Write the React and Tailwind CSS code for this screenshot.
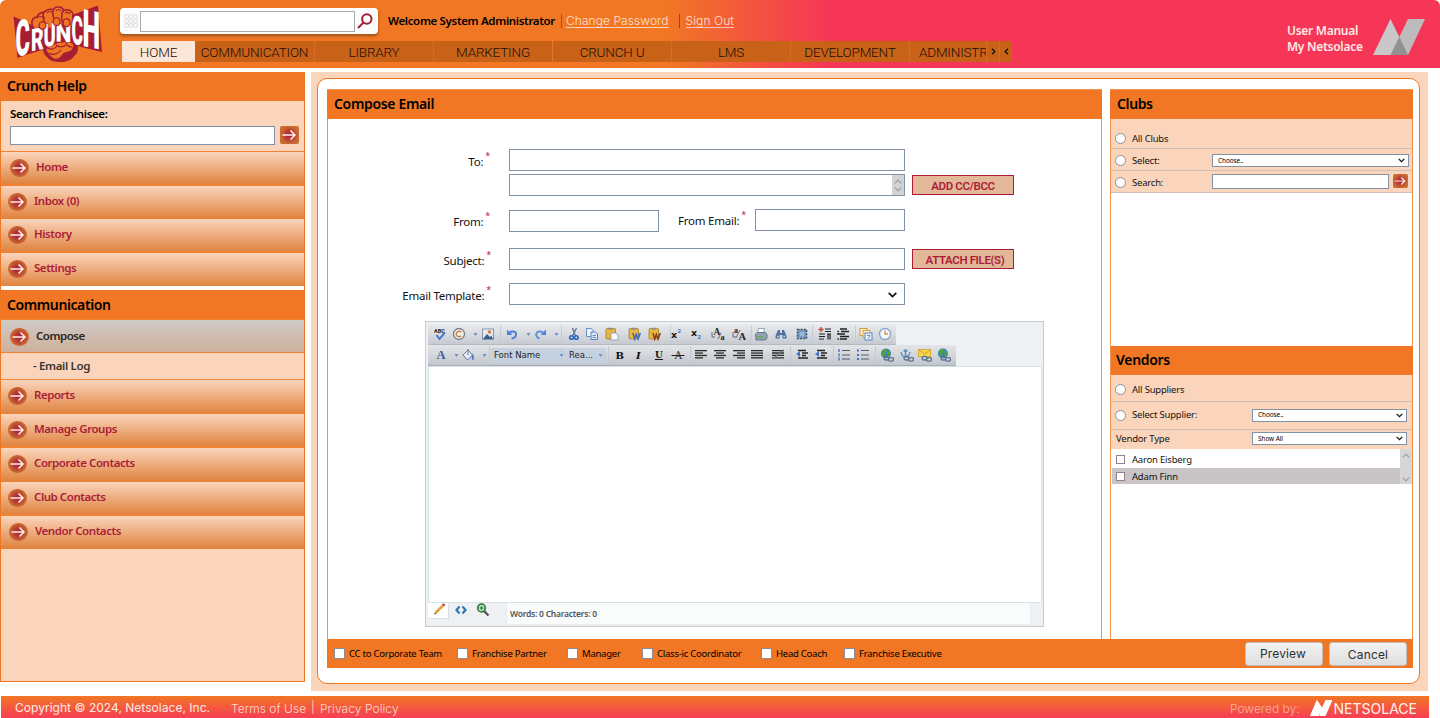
import React from "react";

/* ---------- small shared pieces ---------- */

function Arrow({ className }) {
  return (
    <svg viewBox="0 0 19 18" className={className} fill="none" stroke="#fdeee6" strokeWidth="1.5">
      <path d="M2.5 9H15M10.5 4.5L15 9l-4.5 4.5" />
    </svg>
  );
}

function RoundArrow() {
  return (
    <span className="flex h-[18px] w-[19px] shrink-0 items-center justify-center rounded-full bg-[radial-gradient(circle,#a81f3a_0%,#b53836_30%,#cb6b30_68%)]">
      <Arrow className="h-[18px] w-[19px]" />
    </span>
  );
}

function Chevron({ className }) {
  return (
    <svg viewBox="0 0 8 6" className={className} fill="none" stroke="#111" strokeWidth="1.5">
      <path d="M.6 1L4 4.4 7.4 1" />
    </svg>
  );
}

function NetsolaceMark({ className, a, b, c }) {
  return (
    <svg viewBox="0 0 52 36" className={className}>
      <path d="M0 36L17.5 0 35 36z" fill={a} />
      <path d="M17.5 36L35 0h17L35 36z" fill={b} />
      <path d="M17.5 36L26.3 18 35 36z" fill={c} />
    </svg>
  );
}

function CrunchLogo() {
  return (
    <svg viewBox="0 0 110 68" className="h-[68px] w-[110px]">
      <path d="M43 44l33-3c4 6 2 13-2 15-2 4-8 6-14 6-5 0-10-1-12-4-4-3-6-8-5-14z" fill="#a61e36" />
      <path d="M47 45c6-4 20-6 25-3 2 3 1 7-2 9-5 1-7 2-9 5-3 4-8 3-10 0-4-3-5-7-4-11z" fill="#ef7723" />
      <path d="M47 48c4 2 8 1 10-2M56 45c4 3 7 2 10 0M49 53c4 3 9 1 12-3M66 43c1 3 3 4 6 4" fill="none" stroke="#a61e36" strokeWidth="1.2" />
      <path d="M13.500 16.500L32 25l12-4 28-6 26-9.500 4 46.500-21-5-13-5-10 1-13 6-16 5-11.500 4z" fill="#a61e36" />
      <g fill="#ef7723" stroke="#a61e36" strokeWidth="1.600">
        <path d="M32 24c-1-4 2-7 5-7 1-4 7-6 11-4l1 10-3 8c-5 1-13 0-14-7z" />
        <path d="M43 15c0-4 7-7 11-5l1 14-5 5c-4 0-7-10-7-14z" />
        <path d="M53 11c1-5 8-5 10-2l1 16-4 3c-4-2-8-12-7-17z" />
        <path d="M62 13c2-5 9-4 11 1l-1 12c-1 3-5 4-7 2-3-3-4-11-3-15z" />
      </g>
      <path d="M37 18c2-2 6-2 8 0M47 13c2-2 4-2 6 0M56 11c2-2 4-2 5 0M65 13c2-1 4-1 5 1" fill="none" stroke="#a61e36" strokeWidth="1.100" />
      <g fontFamily="Roboto" fontWeight="900" fontSize="10" fill="#fff">
        <text transform="translate(15.5 57) skewY(-13) scale(2.2 5)">C</text>
        <g stroke="#a61e36" strokeWidth=".45" paintOrder="stroke">
          <text transform="translate(31 51.5) skewY(-12) scale(1.95 3.1)">R</text>
          <text transform="translate(43.5 47) skewY(-8) scale(1.85 3.2)">U</text>
          <text transform="translate(55.5 41.5) skewY(3) scale(2.25 2.5)">N</text>
        </g>
        <text transform="translate(71.5 43.5) skewY(10) scale(1.75 4)">C</text>
        <text transform="translate(82.500 46) skewY(11) scale(2.500 5.200)">H</text>
      </g>
      <g fill="#ef7723" stroke="#a61e36" strokeWidth="1.200">
        <path d="M39 26c0-5 6-6 7-1 0 5-6 6-7 1z" />
        <path d="M53 22c0-5 6-6 7-1 0 6-6 6-7 1z" />
        <path d="M63 23c0-5 6-6 7-1 0 6-6 6-7 1z" />
      </g>
    </svg>
  );
}

/* ---------- header ---------- */

const NAV = [
  ["HOME", "w-[73px] bg-[#fce6d8]"],
  ["COMMUNICATION", "w-[119px] bg-[#c96219]"],
  ["LIBRARY", "w-[119px] border-l border-[#d96c1d] bg-[#c96219]"],
  ["MARKETING", "w-[119px] border-l border-[#d96c1d] bg-[#c96219]"],
  ["CRUNCH U", "w-[119px] border-l border-[#e8772a] bg-[#c96219]"],
  ["LMS", "w-[119px] border-l border-[#d96c1d] bg-[#c96219]"],
  ["DEVELOPMENT", "w-[119px] border-l border-[#d96c1d] bg-[#c96219]"],
];

function Header() {
  return (
    <header className="flex h-[68px] rounded-t-[6px] bg-[linear-gradient(90deg,#f17724_0px,#f17724_668px,#f63656_828px,#f63656_100%)]">
      <div className="w-[120px] shrink-0">
        <CrunchLogo />
      </div>
      <div className="flex w-[893px] shrink-0 flex-col pt-2">
        <div className="flex h-[26px] items-center">
          <div className="flex h-[26px] w-[258px] items-center rounded-[4px] border-2 border-white bg-[#fafcfd] shadow-[0_2px_3px_rgba(90,50,20,.55)]">
            <svg viewBox="0 0 14 14" className="ml-[2px] h-[14px] w-[14px]" fill="none" stroke="#dcd6d8" strokeWidth=".9">
              {[2.5, 7, 11.5].map((y) => [2.5, 7, 11.5].map((x) => <circle key={x + "-" + y} cx={x} cy={y} r="2" />))}
            </svg>
            <div className="ml-[2px] h-[21px] w-[215px] border border-[#a9abad] bg-white" />
            <svg viewBox="0 0 16 16" className="ml-[2px] h-4 w-4" fill="none" stroke="#a61e36" strokeWidth="2">
              <circle cx="9.8" cy="6" r="4.7" />
              <path d="M6.5 9.5L1 15" />
            </svg>
          </div>
          <span className="ml-[10px] mb-px w-[170px] whitespace-nowrap text-[11.5px] font-semibold tracking-[-0.34px] text-black">
            Welcome System Administrator
          </span>
          <span className="ml-[3px] h-[14px] w-px bg-[#b5471a]" />
          <a className="ml-[4px] border-b border-[#fbd2bd] font-['Inter',sans-serif] text-[12px] font-light leading-[13px] tracking-[0.07px] text-[#fde0d0]">
            Change Password
          </a>
          <span className="ml-[10px] h-[14px] w-px bg-[#a83a35]" />
          <a className="ml-[6px] border-b border-[#fbc0bd] font-['Inter',sans-serif] text-[12px] font-light leading-[13px] tracking-[0.07px] text-[#fde0d0]">
            Sign Out
          </a>
        </div>
        <nav className="ml-[2px] mt-[7px] flex h-[21px] whitespace-nowrap font-['Roboto',sans-serif] text-[13.5px] font-light leading-[23px] tracking-[-0.2px] text-[#1c0d05]">
          {NAV.map(([label, cls]) => (
            <div key={label} className={"shrink-0 text-center " + cls}>{label}</div>
          ))}
          <div className="w-[77px] shrink-0 overflow-hidden border-l border-[#d96c1d] bg-[#c96219] pl-[9px]">ADMINISTRATION</div>
          <div className="flex w-[13px] shrink-0 items-center justify-center border-l border-[#d96c1d] bg-[#c96219]">
            <svg viewBox="0 0 5 7" className="h-[7px] w-[5px]" fill="none" stroke="#111" strokeWidth="1.3"><path d="M1 .8L3.8 3.5 1 6.2" /></svg>
          </div>
          <div className="flex w-[13px] shrink-0 items-center justify-center border-l border-[#d96c1d] bg-[#c96219]">
            <svg viewBox="0 0 5 7" className="h-[7px] w-[5px]" fill="none" stroke="#111" strokeWidth="1.3"><path d="M4 .8L1.2 3.5 4 6.2" /></svg>
          </div>
        </nav>
      </div>
      <div className="ml-auto flex pr-[15px]">
        <div className="w-[86px] whitespace-nowrap pt-[23px] text-[12px] font-semibold leading-4 tracking-[-0.28px] text-[#fde9e6]">
          <div>User Manual</div>
          <div>My Netsolace</div>
        </div>
        <NetsolaceMark className="mt-[19px] h-9 w-[52px]" a="#c9c7c8" b="#bdbbbc" c="#929091" />
      </div>
    </header>
  );
}

/* ---------- sidebar ---------- */

function SideItem({ label, className }) {
  return (
    <div className={"flex items-center border-[#ef8233] bg-[linear-gradient(180deg,#fad5bc,#e08440)] " + className}>
      <RoundArrow />
      <span className="ml-[7px] pb-[2px] text-[11.5px] font-semibold tracking-[-0.45px] text-[#ab1d37]">{label}</span>
    </div>
  );
}

function Sidebar() {
  return (
    <aside className="flex h-[610px] w-[305px] shrink-0 flex-col border border-t-0 border-[#ef7723] bg-[#fad5bc]">
      <h2 className="h-[29px] shrink-0 bg-[#f17724] pl-[6px] text-[14px] font-semibold leading-[28px] tracking-[-0.4px] text-black">Crunch Help</h2>
      <div className="h-[50px] shrink-0 pl-[9px]">
        <div className="h-[25px] text-[11.5px] font-semibold leading-[26px] tracking-[-0.38px] text-black">Search Franchisee:</div>
        <div className="flex">
          <div className="h-[19px] w-[265px] border border-[#8492a6] bg-white" />
          <span className="ml-[5px] flex h-[18px] w-[19px] rounded-[2px] bg-[radial-gradient(circle,#a81f3a_0%,#b53836_30%,#cb6b30_68%)]">
            <Arrow className="h-[18px] w-[19px]" />
          </span>
        </div>
      </div>
      <SideItem label="Home" className="h-[35px] border-b-2 border-t pl-[9px]" />
      <SideItem label="Inbox (0)" className="h-[33px] border-b pl-[7px] pb-px" />
      <SideItem label="History" className="h-[34px] border-b-2 pl-[7px]" />
      <SideItem label="Settings" className="h-[33px] pb-px pl-[7px]" />
      <div className="h-1 shrink-0 bg-white" />
      <h2 className="h-[29px] shrink-0 bg-[#f17724] pl-[6px] text-[14px] font-semibold leading-[30px] tracking-[-0.4px] text-black">Communication</h2>
      <div className="flex h-[34px] shrink-0 items-center border-y border-[#ef8233] bg-[linear-gradient(180deg,#cfcac6,#ceb09c)] pl-[9px] pt-px">
        <RoundArrow />
        <span className="ml-[7px] pb-[2px] text-[11.5px] font-semibold tracking-[-0.5px] text-[#2b2523]">Compose</span>
      </div>
      <div className="h-[27px] shrink-0 border-b border-[#ef8233] pl-8 text-[11.5px] font-semibold leading-[26px] tracking-[-0.35px] text-[#3a3431]">
        - Email Log
      </div>
      <SideItem label="Reports" className="h-[34px] border-b pb-px pl-[7px]" />
      <SideItem label="Manage Groups" className="h-[34px] border-b-2 pl-[7px]" />
      <SideItem label="Corporate Contacts" className="h-[34px] border-b pb-px pl-[7px]" />
      <SideItem label="Club Contacts" className="h-[34px] border-b-2 pl-[7px]" />
      <SideItem label="Vendor Contacts" className="h-[33px] border-b pl-[8px]" />
    </aside>
  );
}

/* ---------- editor toolbar ---------- */

const Svg = ({ className, children }) => (
  <svg viewBox="0 0 14 14" className={"h-[14px] w-[14px] shrink-0 " + className}>{children}</svg>
);
const Sep = ({ className }) => <span className={"h-[18px] w-px shrink-0 bg-[#c3cbd4] " + className} />;
const Caret = ({ className }) => (
  <svg viewBox="0 0 5 3" className={"h-[3px] w-[5px] shrink-0 " + className}><path d="M.5 0h4L2.5 3z" fill="#6a92c4" /></svg>
);
const Lines = ({ className, rows }) => (
  <Svg className={className}>
    {rows.map(([x, w], i) => <rect key={i} x={x} y={2 + i * 2.4} width={w} height="1.3" fill="#2a2a2a" />)}
  </Svg>
);
const Globe = () => (
  <g>
    <circle cx="6" cy="5.5" r="5" fill="#3f7fc4" />
    <path d="M2 3c2-3 5-2 5-.5S4.500 5 5 7 3 9 1.500 7zM7.500 3.500c1-1.500 3-.5 3 2S8.500 9.500 7.500 7.500z" fill="#4ba243" />
  </g>
);
const Chain = () => (
  <g fill="none" stroke="#5f7390" strokeWidth="1.300">
    <rect x="4" y="8.500" width="5" height="3.500" rx="1.700" />
    <rect x="8.500" y="9.700" width="5" height="3.500" rx="1.700" />
  </g>
);
const Clipboard = ({ mark }) => (
  <g>
    <rect x="1" y="1.500" width="9.500" height="10.500" rx="1" fill="#e9b640" stroke="#9a7323" strokeWidth=".7" />
    <rect x="3.500" y=".7" width="4" height="2" fill="#8b8f96" />
    {mark ? (
      <path d="M5 6l1.700 6 1.700-4.500 1.700 4.500 2.200-6" fill="none" stroke={mark} strokeWidth="1.600" />
    ) : (
      <path d="M6 6h4.500l2.500 2v5H6z" fill="#f7fafd" stroke="#7e8da3" strokeWidth=".7" />
    )}
  </g>
);

function ToolRowOne() {
  return (
    <div className="flex h-[21px] w-[468px] items-center border-b border-[#b4bac1] bg-[linear-gradient(180deg,#e9ebed,#c7cbd1)]">
      <Svg className="ml-[5px]">
        <text x="1" y="5.500" fontFamily="Roboto" fontWeight="700" fontSize="5.500" fill="#222">ABC</text>
        <path d="M3.500 8l3 4L12 5.500" fill="none" stroke="#4a7bd0" strokeWidth="2" />
      </Svg>
      <Svg className="ml-[5px]">
        <circle cx="7" cy="7" r="5.500" fill="#f2efe9" stroke="#777c85" strokeWidth="1.300" />
        <path d="M9.200 5.200a2.800 2.800 0 1 0 0 3.600" fill="none" stroke="#b98a43" strokeWidth="1.500" />
      </Svg>
      <Caret className="ml-[7px]" />
      <Svg className="ml-[3px]">
        <rect x="1.500" y="2" width="11" height="10.500" fill="#dfeaf5" stroke="#8997aa" />
        <path d="M2 12l4-5 3 3 1.500-1.500L12 12z" fill="#38618f" />
        <circle cx="8.500" cy="5" r="1.700" fill="#de7b3d" />
      </Svg>
      <Sep className="ml-[5px]" />
      <Svg className="ml-[4px]"><path d="M6.500 11.500c3.500-.5 5-2.500 4.500-5C10.300 4 7 4 4.500 5.500" fill="none" stroke="#4a82d8" strokeWidth="2" /><path d="M2 2.500V8h5.500z" fill="#4a82d8" /></Svg>
      <Caret className="ml-[7px]" />
      <Svg className="ml-[3px]"><path d="M5.500 11.500C2.500 10.500 1.500 8 2.700 6 4 4 7 4 9 5.500" fill="none" stroke="#5b93dd" strokeWidth="2" /><path d="M12 2.500V8H6.500z" fill="#4a82d8" /></Svg>
      <Caret className="ml-[6px]" />
      <Sep className="ml-[2px]" />
      <Svg className="ml-[5px]"><path d="M5.500 1l3 8M9.500 1l-4 8" stroke="#5f7390" strokeWidth="1.300" /><circle cx="4.500" cy="10.500" r="1.800" fill="none" stroke="#2f66c0" strokeWidth="1.600" /><circle cx="9.300" cy="10.500" r="1.800" fill="none" stroke="#2f66c0" strokeWidth="1.600" /></Svg>
      <Svg className="ml-[4px]"><path d="M1.500 1.500h5l1.500 2v6H1.500z" fill="#eef4fb" stroke="#6c8fc3" /><path d="M6 5h4.500l2 2v5.500H6z" fill="#dbe7f6" stroke="#5d84be" /><path d="M7.500 8.500h3.500M7.500 10.500h3.500" stroke="#6c8fc3" /></Svg>
      <Svg className="ml-[6px]"><Clipboard /></Svg>
      <Svg className="ml-[9px]"><Clipboard mark="#3a6cc4" /></Svg>
      <Svg className="ml-[6px]"><Clipboard mark="#8d3f1d" /></Svg>
      <Sep className="ml-[8px]" />
      <Svg className="ml-0"><text x="0" y="11" fontFamily="DejaVu Sans" fontWeight="700" fontSize="9.500" fill="#1b1b1b">x</text><text x="6.500" y="6" fontFamily="Roboto" fontWeight="700" fontSize="6" fill="#3a6cc4">2</text></Svg>
      <Svg className="ml-[6px]"><text x="0" y="9" fontFamily="DejaVu Sans" fontWeight="700" fontSize="9.500" fill="#1b1b1b">x</text><text x="6.500" y="12" fontFamily="Roboto" fontWeight="700" fontSize="6" fill="#3a6cc4">2</text></Svg>
      <Svg className="ml-[6px]"><text x="2.500" y="8" fontFamily="Liberation Serif" fontWeight="700" fontSize="9.500" fill="#222">A</text><text x="9.500" y="13" fontFamily="Liberation Serif" fontWeight="700" fontSize="8" fill="#222">a</text><path d="M1 5v5h3M7 12l3-6" fill="none" stroke="#5b6e8c" /></Svg>
      <Svg className="ml-[7px]"><text x="2" y="6" fontFamily="Liberation Serif" fontWeight="700" fontSize="8" fill="#222">a</text><text x="6.500" y="13" fontFamily="Liberation Serif" fontWeight="700" fontSize="10.500" fill="#222">A</text><path d="M1 5v5h3M4 11l4-8" fill="none" stroke="#5b6e8c" /></Svg>
      <Sep className="ml-[5px]" />
      <Svg className="ml-[2px]"><path d="M4.500 1.500h6l-1 5h-6z" fill="#fff" stroke="#7f93ae" strokeWidth=".8" /><path d="M1.500 7l2-1.500h8l1.500 2v4l-2 1.500h-9z" fill="#93a3b6" stroke="#566579" strokeWidth=".8" /><path d="M3 10h6" stroke="#5fb24a" strokeWidth="1.500" /></Svg>
      <Svg className="ml-[6px]"><path d="M4 3h2v3h2V3h2l2.500 6v2.500H8.500V8h-3v3.500H1.500V9z" fill="#4d709f" /><path d="M3 9.500h1.500M9.500 9.500H11" stroke="#c6d8ee" strokeWidth="1.400" /></Svg>
      <Svg className="ml-[7px]"><rect x="2.500" y="2.500" width="9" height="9" fill="#7c9fc6" stroke="#3e536e" strokeWidth="1.600" strokeDasharray="2 1.200" /><rect x="5" y="5" width="4" height="4" fill="#9ab8d6" /></Svg>
      <Sep className="ml-[3px]" />
      <Svg className="ml-[5px]"><path d="M3 0v5M.5 2.500h5" stroke="#c23a2b" strokeWidth="1.300" /><path d="M7 2h6M7 4.500h6M1 7h6M1 9.500h6M1 12h5M10 6.500v6M12 6.500v6M9 7h4" stroke="#222" strokeWidth="1.200" /></Svg>
      <Svg className="ml-[4px]"><path d="M4 2h7M1.500 4.500h1.500M5 4.500h8M1 7h8M4 9.500h9M1.500 12h1.500M4 12h7" stroke="#222" strokeWidth="1.300" /></Svg>
      <Sep className="ml-[5px]" />
      <Svg className="ml-[3px]"><rect x="1" y="1.500" width="7" height="7" fill="#fff3d8" stroke="#d29a35" /><rect x="4" y="3.500" width="7" height="7" fill="#fdf0d4" stroke="#c9a04e" /><rect x="6" y="6" width="7" height="7" fill="#e9f1fa" stroke="#5d84be" /><path d="M8 8.500h3l-1.500 3" fill="none" stroke="#5d84be" strokeWidth=".9" /></Svg>
      <Svg className="ml-[5px]"><circle cx="7" cy="7" r="5.500" fill="#f5f8fc" stroke="#86a6d0" strokeWidth="1.400" /><path d="M7 3.500V7h3" fill="none" stroke="#d2903a" strokeWidth="1.300" /></Svg>
    </div>
  );
}

function ToolRowTwo() {
  return (
    <div className="flex h-[21px] w-[528px] items-center border-b border-[#a9afb7] bg-[linear-gradient(180deg,#e3e5e8,#c3c7cd)]">
      <Svg className="ml-[6px]"><text x="2.500" y="11" fontFamily="Liberation Serif" fontWeight="700" fontSize="12.500" fill="#3c5f9a">A</text></Svg>
      <Caret className="ml-[6px]" />
      <Svg className="ml-[2px]"><path d="M2 7l5-5 4.500 5-5 5z" fill="#e6edf6" stroke="#657a99" /><path d="M7 1v6" stroke="#657a99" /><path d="M11.500 6c1.500 2 1.500 4 .5 6-1.500-1-1-4-.5-6z" fill="#4a7bd0" stroke="#4a7bd0" strokeWidth=".6" /></Svg>
      <Caret className="ml-[7px]" />
      <Sep className="ml-[2px]" />
      <div className="ml-[1px] flex h-[15px] w-[75px] shrink-0 items-center bg-[#c6d1e0] pl-[3px] font-['DejaVu_Sans',sans-serif] text-[8.5px] text-[#1d1d1d]">
        Font Name
        <Caret className="ml-auto mr-[2px]" />
      </div>
      <div className="ml-[1px] flex h-[15px] w-[39px] shrink-0 items-center bg-[#c6d1e0] pl-[2px] font-['DejaVu_Sans',sans-serif] text-[8.5px] text-[#1d1d1d]">
        Rea...
        <Caret className="ml-auto mr-[3px]" />
      </div>
      <Sep className="ml-[2px]" />
      <Svg className="ml-[4px]"><text x="2.500" y="10.500" fontFamily="DejaVu Serif" fontWeight="700" fontSize="10" fill="#111">B</text></Svg>
      <Svg className="ml-[5px]"><text x="4" y="10.500" fontFamily="DejaVu Serif" fontWeight="700" fontStyle="italic" fontSize="10" fill="#111">I</text></Svg>
      <Svg className="ml-[6px]"><text x="3" y="9.500" fontFamily="DejaVu Serif" fontWeight="700" fontSize="9" fill="#111">U</text><path d="M3 11.500h8" stroke="#111" /></Svg>
      <Svg className="ml-[5px]"><text x="3.500" y="11" fontFamily="DejaVu Serif" fontSize="10.500" fill="#333">A</text><path d="M.5 7.500h13" stroke="#222" /></Svg>
      <Sep className="ml-[5px]" />
      <Lines className="ml-[3px]" rows={[[1, 12], [1, 8], [1, 12], [1, 8]]} />
      <Lines className="ml-[5px]" rows={[[1, 12], [3, 8], [1, 12], [3, 8]]} />
      <Lines className="ml-[5px]" rows={[[1, 12], [5, 8], [1, 12], [5, 8]]} />
      <Lines className="ml-[4px]" rows={[[1, 12], [1, 12], [1, 12], [1, 12]]} />
      <Svg className="ml-[7px]"><path d="M1 2.600h12M1 5h12M1 7.400h12M1 9.800h12" stroke="#2a2a2a" strokeWidth="1.300" /><path d="M2 11L12 2" stroke="#777" strokeWidth="1.200" /></Svg>
      <Sep className="ml-[5px]" />
      <Svg className="ml-[4px]"><path d="M3 2.500h8M7 5h6M7 7.500h4M3 10h10" stroke="#222" strokeWidth="1.500" /><path d="M5 3v6L1 6z" fill="#4176cf" /></Svg>
      <Svg className="ml-[5px]"><path d="M3 2.500h8M7 5h6M7 7.500h4M3 10h10" stroke="#222" strokeWidth="1.500" /><path d="M5 3v6L1 6z" fill="#4176cf" /></Svg>
      <Sep className="ml-[5px]" />
      <Svg className="ml-[3px]"><path d="M5 2.500h8M5 7h8M5 11h8" stroke="#555c66" /><path d="M2 1v3M2 5.500v3M2 9.500v3" stroke="#4176cf" strokeWidth="1.400" /></Svg>
      <Svg className="ml-[5px]"><path d="M5 2.500h8M5 7h8M5 11h8" stroke="#555c66" /><path d="M1 2.500h2M1 7h2M1 11h2" stroke="#4176cf" strokeWidth="1.800" /></Svg>
      <Sep className="ml-[5px]" />
      <Svg className="ml-[4px]"><Globe /><Chain /></Svg>
      <Svg className="ml-[6px]"><path d="M5.500 1v8M1 4c.500 3 2 5 4.500 5S9.500 7 10 4M3.500 3h4" fill="none" stroke="#4b8cc4" strokeWidth="1.300" /><Chain /></Svg>
      <Svg className="ml-[4px]"><rect x=".5" y="1.500" width="12" height="7" fill="#f7d64a" stroke="#d3a52c" strokeWidth=".8" /><path d="M1 2l5.500 4L12 2" fill="none" stroke="#c99a25" strokeWidth=".8" /><Chain /></Svg>
      <Svg className="ml-[5px]"><Globe /><Chain /></Svg>
    </div>
  );
}

function Editor() {
  return (
    <div className="ml-[97px] flex h-[306px] w-[619px] flex-col border border-[#c6cbcb] bg-[#eff0f3] pl-[2px] pt-[2px]">
      <ToolRowOne />
      <ToolRowTwo />
      <div className="h-[237px] w-[614px] shrink-0 border border-[#d3e3e8] bg-white" />
      <div className="flex">
        <div className="flex h-[16px] w-[21px] justify-center border-b border-r border-[#d3e3e8] bg-white">
          <Svg className="-mr-[4px] -mt-[1px]">
            <path d="M2.500 11L10 3.500" stroke="#e2a53d" strokeWidth="2.600" />
            <path d="M10 3.500l1.500-1.500" stroke="#c4475a" strokeWidth="2.800" />
            <path d="M1.200 12.400l.6-2 1.400 1.400z" fill="#333" />
          </Svg>
        </div>
        <Svg className="ml-[5px]"><path d="M5.500 3.500L2.500 7l3 3.500M8.500 3.500l3 3.500-3 3.500" fill="none" stroke="#2b7bb5" strokeWidth="2.200" /></Svg>
        <Svg className="ml-[8px]">
          <path d="M8 8l4.500 4.500" stroke="#4c4f50" strokeWidth="2.200" />
          <circle cx="5.500" cy="5" r="3.800" fill="#e4f1e0" stroke="#2f7d3a" strokeWidth="1.700" />
          <path d="M5.500 3v4M3.500 5h4" stroke="#2f8f3a" strokeWidth="1.400" />
        </Svg>
        <div className="ml-[16px] h-[22px] w-[525px] border border-t-0 border-[#e6ebed] bg-[#fafcfc] pl-[3px] text-[8.5px] font-semibold leading-[22px] tracking-[-0.24px] text-[#555]">
          Words: 0 Characters: 0
        </div>
      </div>
    </div>
  );
}

/* ---------- compose form ---------- */

function FieldLabel({ children, className }) {
  return (
    <div className={"flex shrink-0 justify-end text-[11.5px] leading-[16px] tracking-[-0.24px] text-[#111] " + className}>
      <span className="mt-[5px]">{children}</span>
      <span className="ml-[2px] mt-px text-[9px] leading-[12px] text-[#b5253f]">*</span>
    </div>
  );
}

function ActionButton({ children, className }) {
  return (
    <div className={"ml-[7px] h-5 w-[102px] border border-[#ab1d37] bg-[#e3b899] text-center font-['Roboto',sans-serif] text-[11.5px] font-semibold leading-[20px] tracking-[-0.38px] text-[#ab1d37] " + className}>
      {children}
    </div>
  );
}

function ComposePanel() {
  return (
    <section className="flex h-[550px] w-[775px] shrink-0 flex-col border border-y-0 border-[#f1924f] bg-white">
      <h2 className="-mx-px h-[30px] shrink-0 border-t border-[#f39350] bg-[#f17724] pl-[7px] text-[14px] font-semibold leading-[28px] tracking-[-0.34px] text-black">
        Compose Email
      </h2>
      <div className="mt-[30px] flex h-[22px]">
        <FieldLabel className="w-[162px]">To:</FieldLabel>
        <div className="ml-[19px] h-[22px] w-[396px] border border-[#8492a6]" />
      </div>
      <div className="mt-[3px] flex h-[22px] pl-[181px]">
        <div className="flex h-[22px] w-[396px] justify-end border border-[#8492a6]">
          <div className="flex w-[12px] flex-col items-center justify-center gap-[3px] bg-[#d3d3d3]">
            <svg viewBox="0 0 8 5" className="h-[5px] w-2" fill="none" stroke="#9b9b9b" strokeWidth="1.2"><path d="M.8 4.300L4 1l3.200 3.300" /></svg>
            <svg viewBox="0 0 8 5" className="h-[5px] w-2" fill="none" stroke="#9b9b9b" strokeWidth="1.2"><path d="M.8.700L4 4 7.200.700" /></svg>
          </div>
        </div>
        <ActionButton className="mt-[1px]">ADD CC/BCC</ActionButton>
      </div>
      <div className="mt-[13px] flex h-[23px]">
        <FieldLabel className="w-[162px]">From:</FieldLabel>
        <div className="ml-[19px] mt-px h-[22px] w-[150px] border border-[#8492a6]" />
        <FieldLabel className="-mt-px w-[87px]">From Email:</FieldLabel>
        <div className="ml-[9px] h-[22px] w-[150px] border border-[#8492a6]" />
      </div>
      <div className="mt-[16px] flex h-[22px]">
        <FieldLabel className="w-[163px]">Subject:</FieldLabel>
        <div className="ml-[18px] h-[22px] w-[396px] border border-[#8492a6]" />
        <ActionButton className="mt-[1px] pl-[4px]">ATTACH FILE(S)</ActionButton>
      </div>
      <div className="mt-[13px] flex h-[22px]">
        <FieldLabel className="w-[163px]">Email Template:</FieldLabel>
        <div className="ml-[18px] flex h-[22px] w-[396px] items-center justify-end border border-[#8492a6] pr-[7px]">
          <svg viewBox="0 0 9 6" className="mt-px h-[6px] w-[9px]" fill="none" stroke="#111" strokeWidth="1.700"><path d="M.7.800l3.800 3.700L8.300.800" /></svg>
        </div>
      </div>
      <div className="mt-4">
        <Editor />
      </div>
    </section>
  );
}

/* ---------- right column ---------- */

const Radio = () => <span className="mr-[6px] h-[11px] w-[11px] shrink-0 rounded-full border border-[#8d9096] bg-white" />;
const Check = () => <span className="mr-[7px] h-[9px] w-[9px] shrink-0 border border-[#91838a] bg-white" />;

function Select({ children, className }) {
  return (
    <div className={"ml-auto flex h-[13px] items-center justify-between border border-[#8492a6] bg-white pl-[5px] pr-[3px] text-[6.500px] leading-[10px] tracking-[-0.1px] text-black " + className}>
      {children}
      <Chevron className="h-[5px] w-[7px]" />
    </div>
  );
}

function RightColumn() {
  return (
    <section className="ml-2 flex h-[550px] w-[303px] shrink-0 flex-col border border-y-0 border-[#f1924f] bg-white text-[9.500px] leading-[12px] tracking-[-0.2px] text-[#161210]">
      <h2 className="-mx-px h-[30px] shrink-0 border-t border-[#f39350] bg-[#f17724] pl-[7px] text-[14px] font-semibold leading-[28px] tracking-[-0.38px] text-black">Clubs</h2>
      <div className="flex h-[30px] items-center border-b border-[#d0bfb6] bg-[#fad5bc] pl-1 pt-[10px]"><Radio />All Clubs</div>
      <div className="flex h-[22px] items-center border-b border-[#d0bfb6] bg-[#fad5bc] pl-1 pr-[3px] pt-[2px]">
        <Radio />Select:
        <Select className="w-[197px]">Choose..</Select>
      </div>
      <div className="flex h-[22px] items-center border-b border-[#d0bfb6] bg-[#fad5bc] pl-1 pr-[4px] pt-px">
        <Radio /><span className="mt-px">Search:</span>
        <div className="mb-px ml-auto h-[15px] w-[177px] border border-[#8492a6] bg-white" />
        <span className="mb-[2px] ml-1 flex h-[14px] w-[15px] rounded-[2px] bg-[radial-gradient(circle,#a81f3a_0%,#b53836_30%,#cb6b30_68%)]"><Arrow className="h-[14px] w-[15px]" /></span>
      </div>
      <div className="h-[153px] shrink-0" />
      <h2 className="-mr-px h-[29px] shrink-0 bg-[#f17724] pl-[5px] text-[14px] font-semibold leading-[28px] tracking-[-0.3px] text-black">Vendors</h2>
      <div className="flex h-[27px] items-center border-b border-[#d0bfb6] bg-[#fad5bc] pl-1 pt-[3px]"><Radio />All Suppliers</div>
      <div className="flex h-[28px] items-center border-b border-[#d0bfb6] bg-[#fad5bc] pb-px pl-1 pr-[5px]">
        <Radio />Select Supplier:
        <Select className="w-[155px]">Choose..</Select>
      </div>
      <div className="flex h-[19px] items-center bg-[#fad5bc] pb-[2px] pl-[5px] pr-[5px]">
        Vendor Type
        <Select className="w-[155px]">Show All</Select>
      </div>
      <div className="flex h-[35px]">
        <div className="w-[289px] pl-px">
          <div className="flex h-[19px] items-center pl-1 pt-[2px]"><Check />Aaron Eisberg</div>
          <div className="flex h-[16px] items-center bg-[#c9c5c6] pl-1"><Check /><span className="mt-px">Adam Finn</span></div>
        </div>
        <div className="flex w-[12px] flex-col items-center justify-between bg-[#d6d6d6] py-[4px]">
          <svg viewBox="0 0 8 5" className="h-[5px] w-2" fill="none" stroke="#a29c9f" strokeWidth="1.200"><path d="M.8 4.300L4 1l3.200 3.300" /></svg>
          <svg viewBox="0 0 8 5" className="-mb-[2px] h-[5px] w-2" fill="none" stroke="#a29c9f" strokeWidth="1.200"><path d="M.8.700L4 4 7.200.700" /></svg>
        </div>
      </div>
    </section>
  );
}

/* ---------- bottom bar and footer ---------- */

const COPIES = [
  ["CC to Corporate Team", "w-[123px]"],
  ["Franchise Partner", "w-[110px]"],
  ["Manager", "w-[75px]"],
  ["Class-ic Coordinator", "w-[119px]"],
  ["Head Coach", "w-[83px]"],
  ["Franchise Executive", "w-[120px]"],
];

function BottomBar() {
  return (
    <div className="flex h-[29px] items-center bg-[#f17724] pl-[7px]">
      {COPIES.map(([label, w]) => (
        <label key={label} className={"flex shrink-0 items-center whitespace-nowrap text-[9.500px] tracking-[-0.24px] text-black " + w}>
          <span className="mr-1 h-[11px] w-[11px] border border-[#8f8a90] bg-white" />
          <span className="mt-px">{label}</span>
        </label>
      ))}
      <div className="ml-auto flex gap-[6px] pr-[6px] font-['Inter',sans-serif] text-[12px] tracking-[0.15px] text-[#2f2f33]">
        <div className="h-6 w-[78px] rounded-[3px] border border-[#c3bdba] bg-[linear-gradient(180deg,#f3f3f4,#dedede)] pr-[2px] text-center leading-[22px]">Preview</div>
        <div className="h-6 w-[78px] rounded-[3px] border border-[#c3bdba] bg-[linear-gradient(180deg,#f3f3f4,#dedede)] text-center leading-[24px]">Cancel</div>
      </div>
    </div>
  );
}

function Footer() {
  return (
    <footer className="ml-px mt-[5px] flex h-[22px] w-[1428px] items-center whitespace-nowrap bg-[linear-gradient(180deg,#f17724,#f73d55)] pl-[14px] font-['Inter',sans-serif] text-[12px] leading-[22px]">
      <span className="mt-px w-[216px] tracking-[0.03px] text-[#fdeae3]">Copyright © 2024, Netsolace, Inc.</span>
      <span className="mt-[3px] w-[80px] font-light tracking-[0.04px] text-[#fdd9cd]">Terms of Use</span>
      <span className="w-[9px] font-light text-[#fdd9cd]">|</span>
      <span className="mt-[3px] font-light tracking-[0.06px] text-[#fdd9cd]">Privacy Policy</span>
      <span className="ml-auto mt-[3px] font-light text-[#fbb29b]">Powered by:</span>
      <svg viewBox="0 0 22 16" className="ml-[10px] mt-[2px] h-4 w-[22px]" fill="#fff"><path d="M0 16L7 0l5 7.500L15.500 0H22.500l-7 16h-6L10 11 7 16z" /><path d="M0 16L7 0l5 8-3 8z" /></svg>
      <span className="ml-[2px] mr-[12px] mt-[3px] text-[14px] text-[#fff3f0]">NETSOLACE</span>
    </footer>
  );
}

export default function App() {
  return (
    <div className="h-[718px] w-[1440px] overflow-hidden bg-white font-['Noto_Sans',sans-serif]">
      <Header />
      <div className="mt-1 flex h-[619px]">
        <Sidebar />
        <main className="ml-[6px] h-[619px] w-[1117px] bg-[#fad5bc] pl-[6px] pt-[6px]">
          <div className="h-[606px] w-[1103px] rounded-[10px] border border-[#ef7723] bg-white pl-[9px] pt-[10px]">
            <div className="w-[1086px]">
              <div className="flex">
                <ComposePanel />
                <RightColumn />
              </div>
              <BottomBar />
            </div>
          </div>
        </main>
      </div>
      <Footer />
    </div>
  );
}
